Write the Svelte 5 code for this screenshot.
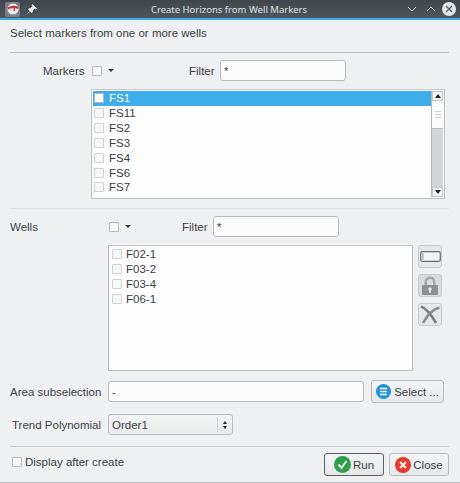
<script lang="ts">
	const markers = ['FS1', 'FS11', 'FS2', 'FS3', 'FS4', 'FS6', 'FS7'];
	const wells = ['F02-1', 'F03-2', 'F03-4', 'F06-1'];
</script>

<div class="dialog">
	<header class="titlebar">
		<div class="appicon">
			<svg width="14" height="14" viewBox="0 0 14 14">
				<circle cx="7" cy="7" r="6" fill="#e8e8e8" stroke="#888" />
				<path d="M1.5 5.5 Q7 2.5 12.5 5 L12 7 L9 6 L9 9 L7.5 9 L7.5 6 Q4 6 2 7.5 Z" fill="#c9343a" />
			</svg>
		</div>
		<svg class="pin" width="10" height="10" viewBox="0 0 10 10">
			<path d="M5.5 0.5 L9.5 4.5 L8.5 5 L7.5 4.5 L5.5 6.5 L5.5 8 L4.5 8.5 L1.5 5.5 L2 4.5 L3.5 4.5 L5.5 2.5 L5 1.5 Z M3 7 L0.5 9.5" fill="#eee" stroke="#eee" stroke-width="0.6" />
		</svg>
		<div class="title">Create Horizons from Well Markers</div>
		<svg class="winbtn" width="10" height="10" viewBox="0 0 10 10"><path d="M1 3 L5 7 L9 3" fill="none" stroke="#d8dadc" /></svg>
		<svg class="winbtn up" width="10" height="10" viewBox="0 0 10 10"><path d="M1 7 L5 3 L9 7" fill="none" stroke="#d8dadc" /></svg>
		<div class="close">
			<svg width="8" height="8" viewBox="0 0 8 8"><path d="M1 1 L7 7 M7 1 L1 7" stroke="#555c63" stroke-width="1.2" /></svg>
		</div>
	</header>

	<main class="content">
		<div class="intro">Select markers from one or more wells</div>
		<hr class="rule strong" />

		<div class="row markers-row">
			<span class="lbl markers-lbl">Markers</span>
			<span class="check bright"></span>
			<span class="caret"></span>
			<span class="lbl filter-lbl">Filter</span>
			<input class="field filter" value="*" />
		</div>

		<div class="list markers-list">
			<div class="rows">
				{#each markers as m, i}
					<div class="item" class:selected={i === 0}>
						<span class="check" class:bright={i === 0}></span>{m}
					</div>
				{/each}
			</div>
			<div class="scrollbar">
				<div class="arrow"><span class="tri-up"></span></div>
				<div class="thumb"><i></i><i></i><i></i></div>
				<div class="track"></div>
				<div class="arrow"><span class="tri-down"></span></div>
			</div>
		</div>

		<hr class="rule faint" />

		<div class="row wells-row">
			<span class="lbl wells-lbl">Wells</span>
			<span class="check bright"></span>
			<span class="caret"></span>
			<span class="lbl filter-lbl">Filter</span>
			<input class="field filter" value="*" />
		</div>

		<div class="wells-body">
			<div class="list wells-list">
				{#each wells as w}
					<div class="item"><span class="check"></span>{w}</div>
				{/each}
			</div>
			<div class="tools">
				<button class="tool" aria-label="Toggle">
					<svg width="21" height="11" viewBox="0 0 21 11">
						<rect x="0.7" y="0.7" width="19.6" height="9.6" rx="1.5" fill="#f2f2f2" stroke="#6a6a6a" stroke-width="1.2" />
						<rect x="2" y="2" width="1.5" height="7" fill="#b5b5b5" />
					</svg>
				</button>
				<button class="tool shaded" aria-label="Lock">
					<svg width="20" height="21" viewBox="0 0 20 21">
						<path d="M4.5 10 V7 A5.5 5.5 0 0 1 15.5 7 V10 H13 V7 A3 3 0 0 0 7 7 V10 Z" fill="#a5a5a5" />
						<rect x="2" y="10" width="16" height="10" rx="1" fill="#8f8f8f" />
						<circle cx="10" cy="14" r="1.7" fill="#eee" />
						<rect x="9.2" y="14" width="1.6" height="4" fill="#eee" />
					</svg>
				</button>
				<button class="tool" aria-label="Remove">
					<svg width="20" height="20" viewBox="0 0 20 20">
						<path d="M1 1.5 Q8 4 16 18" fill="none" stroke="#7c7c7c" stroke-width="2.6" />
						<path d="M19.5 2.5 Q10 5 3 18" fill="none" stroke="#8a8a8a" stroke-width="2.6" />
					</svg>
				</button>
			</div>
		</div>

		<div class="row area-row">
			<span class="lbl">Area subselection</span>
			<input class="field area" value="-" />
			<button class="btn select-btn">
				<svg width="15" height="15" viewBox="0 0 15 15">
					<circle cx="7.5" cy="7.5" r="7.5" fill="#1e93d6" />
					<path d="M4 4.5 H11 M4 7.5 H11 M4 10.5 H11" stroke="#fff" stroke-width="1.6" />
				</svg>
				Select ...
			</button>
		</div>

		<div class="row trend-row">
			<span class="lbl">Trend Polynomial</span>
			<div class="combo">
				<span class="combo-text">Order1</span>
				<span class="combo-arrows"><span class="tri-up small"></span><span class="tri-down small"></span></span>
			</div>
		</div>

		<hr class="rule soft" />

		<div class="row footer">
			<span class="check footer-check"></span>
			<span class="lbl display-lbl">Display after create</span>
			<button class="btn run">
				<svg width="17" height="17" viewBox="0 0 17 17">
					<circle cx="8.5" cy="8.5" r="8.5" fill="#2f9e48" />
					<path d="M4.5 8.5 L7.5 12 L12.5 5" fill="none" stroke="#e8f3e8" stroke-width="2" />
				</svg>
				Run
			</button>
			<button class="btn close-btn">
				<svg width="16" height="16" viewBox="0 0 16 16">
					<circle cx="8" cy="8" r="8" fill="#e8392f" />
					<path d="M5 5 L11 11 M11 5 L5 11" stroke="#fbe9e5" stroke-width="2.2" />
				</svg>
				Close
			</button>
		</div>
	</main>
</div>

<style>
	:global(body) {
		margin: 0;
		background: #eff0f1;
	}

	.dialog {
		width: 460px;
		height: 483px;
		box-sizing: border-box;
		border-bottom: 1px solid #b9bbbd;
		background: #eff0f1;
		color: #3a3f44;
		font-family: 'Liberation Sans', Arial, sans-serif;
		font-size: 11.5px;
		overflow: hidden;
	}

	.titlebar {
		height: 18px;
		display: flex;
		align-items: center;
		padding: 0 4px 0 5px;
		background: linear-gradient(#3f464c, #4f575e);
		border-bottom: 2px solid #3daee9;
		color: #dfe1e3;
	}

	.appicon {
		width: 15px;
		height: 15px;
		display: flex;
		align-items: center;
		justify-content: center;
		background: #7a7f84;
		border-radius: 2px;
	}

	.pin {
		margin-left: 7px;
	}

	.title {
		flex: 1;
		text-align: center;
		font-family: 'Noto Sans', 'Open Sans', sans-serif;
		font-size: 9.5px;
		margin-left: 14px;
	}

	.winbtn {
		margin-right: 9px;
	}

	.winbtn.up {
		margin-right: 6px;
	}

	.close {
		width: 14px;
		height: 14px;
		border-radius: 50%;
		background: #e6e8ea;
		display: flex;
		align-items: center;
		justify-content: center;
	}

	.content {
		padding: 0 10px;
	}

	.intro {
		height: 14px;
		line-height: 14px;
		margin-top: 6px;
	}

	.rule {
		border: 0;
		height: 1px;
		margin: 0;
		background: #bcbec0;
		width: 439px;
	}

	.rule.strong {
		margin-top: 12px;
	}

	.rule.faint {
		margin-top: 9px;
		background: #dcdee0;
	}

	.rule.soft {
		margin-top: 11px;
		background: #c9cbcd;
	}

	.row {
		display: flex;
		align-items: center;
	}

	.lbl {
		white-space: nowrap;
	}

	.markers-row {
		margin-top: 7px;
		height: 21px;
		padding-left: 33px;
	}

	.markers-lbl {
		width: 49px;
	}

	.wells-row {
		margin-top: 7px;
		height: 21px;
	}

	.wells-lbl {
		width: 99px;
	}

	.check {
		display: inline-block;
		flex: none;
		width: 8px;
		height: 8px;
		border: 1px solid #cfd1d3;
		background: #f6f7f7;
		border-radius: 1px;
	}

	.check.bright {
		background: #fcfcfc;
		border-color: #b4b6b8;
	}

	.caret {
		width: 0;
		height: 0;
		margin-left: 6px;
		border-left: 3px solid transparent;
		border-right: 3px solid transparent;
		border-top: 3px solid #31363b;
	}

	.filter-lbl {
		width: 26px;
		margin-left: 75px;
		margin-right: 5px;
	}

	.wells-row .filter-lbl {
		margin-left: 51px;
	}

	.field {
		box-sizing: border-box;
		height: 21px;
		border: 1px solid #b8babc;
		border-radius: 3px;
		background: #fcfcfc;
		padding: 0 3px;
		color: #31363b;
		font: inherit;
		font-size: 11px;
		outline: none;
	}

	.filter {
		width: 126px;
	}

	.list {
		box-sizing: border-box;
		background: #fcfdfc;
		border: 1px solid #bcbec0;
		border-top-color: #c8cacc;
	}

	.markers-list {
		margin: 8px 0 0 81px;
		width: 354px;
		height: 110px;
		padding: 1px;
		display: flex;
	}

	.rows {
		flex: 1;
	}

	.item {
		height: 14.85px;
		display: flex;
		align-items: center;
		gap: 5px;
		box-sizing: border-box;
		padding-left: 1px;
		white-space: nowrap;
	}

	.item.selected {
		background: #3daee9;
		color: #fcfcfc;
	}

	.scrollbar {
		width: 11px;
		display: flex;
		flex-direction: column;
		background: #d3d4d5;
		border-left: 1px solid #b6b8ba;
	}

	.arrow {
		height: 10px;
		display: flex;
		align-items: center;
		justify-content: center;
		background: #f4f5f5;
		border: 1px solid #c4c6c8;
		box-sizing: border-box;
	}

	.tri-up,
	.tri-down {
		width: 0;
		height: 0;
		border-left: 3px solid transparent;
		border-right: 3px solid transparent;
	}

	.tri-up {
		border-bottom: 4px solid #232629;
	}

	.tri-down {
		border-top: 4px solid #232629;
	}

	.tri-up.small {
		border-left-width: 2.5px;
		border-right-width: 2.5px;
		border-bottom-width: 3px;
	}

	.tri-down.small {
		border-left-width: 2.5px;
		border-right-width: 2.5px;
		border-top-width: 3px;
	}

	.thumb {
		height: 28px;
		box-sizing: border-box;
		background: #fbfbfb;
		border-bottom: 1px solid #bcbec0;
		display: flex;
		flex-direction: column;
		justify-content: center;
		align-items: center;
		gap: 2px;
	}

	.thumb i {
		display: block;
		width: 6px;
		height: 1px;
		background: #d0d2d4;
	}

	.track {
		flex: 1;
	}

	.wells-body {
		display: flex;
		margin: 8px 0 0 98px;
	}

	.wells-list {
		width: 305px;
		height: 126px;
		padding: 1px;
	}

	.wells-list .item {
		padding-left: 2px;
		gap: 4px;
	}

	.tools {
		display: flex;
		flex-direction: column;
		gap: 6px;
		margin-left: 5px;
	}

	.tool {
		width: 24px;
		height: 23px;
		padding: 0;
		display: flex;
		align-items: center;
		justify-content: center;
		background: #e6e7e8;
		border: 1px solid #c6c8ca;
		border-radius: 3px;
	}

	.tool.shaded {
		background: #d9dadb;
	}

	.area-row {
		margin-top: 9px;
		height: 23px;
	}

	.area-row .lbl {
		width: 98px;
	}

	.area {
		width: 256px;
	}

	.btn {
		display: flex;
		align-items: center;
		justify-content: center;
		box-sizing: border-box;
		height: 23px;
		padding: 0;
		gap: 2px;
		border: 1px solid #b8babc;
		border-radius: 3px;
		background: linear-gradient(#f4f5f5, #e6e7e8);
		color: #3a3f44;
		font: inherit;
		white-space: nowrap;
	}

	.select-btn {
		width: 73px;
		margin-left: 7px;
		gap: 3px;
	}

	.trend-row {
		margin-top: 11px;
		height: 21px;
		padding-left: 2px;
	}

	.trend-row .lbl {
		width: 96px;
	}

	.combo {
		box-sizing: border-box;
		width: 125px;
		height: 21px;
		display: flex;
		align-items: center;
		justify-content: space-between;
		padding: 0 3px;
		background: linear-gradient(#f4f5f5, #e9eaeb);
		border: 1px solid #b8babc;
		border-radius: 3px;
	}

	.combo-arrows {
		display: flex;
		flex-direction: column;
		gap: 2px;
		padding: 3px 2px 3px 5px;
		border-left: 1px solid #d2d4d6;
	}

	.footer {
		margin-top: 6px;
		height: 23px;
		padding-left: 2px;
	}

	.footer-check {
		background: #f6f7f7;
		border-color: #b8babc;
		margin-bottom: 6px;
	}

	.display-lbl {
		margin-left: 3px;
		margin-bottom: 6px;
		flex: 1;
	}

	.run {
		width: 60px;
		border-color: #5b6066;
	}

	.close-btn {
		width: 60px;
		margin-left: 5px;
		margin-right: 1px;
	}
</style>
